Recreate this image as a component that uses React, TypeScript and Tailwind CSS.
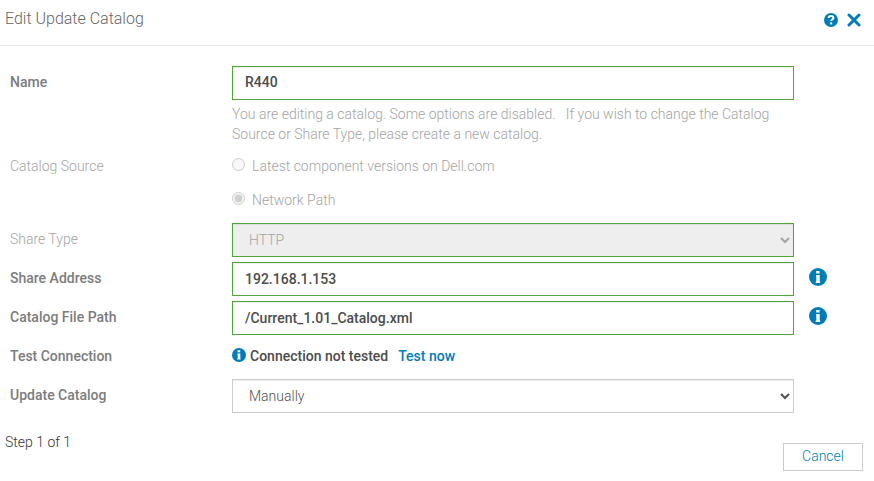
import type { ReactNode } from 'react';

function InfoIcon({ size }: { size: number }) {
  return (
    <svg width={size} height={size} viewBox="0 0 18 18" className="block shrink-0" aria-hidden="true">
      <circle cx="9" cy="9" r="9" fill="#007db8" />
      <path d="M7.2 3h3.4v2.5H7.2zM7 7h3.7v6.5h.4v1.4H6.7v-1.4h.6V8.4H7z" fill="#fff" />
    </svg>
  );
}

function HelpIcon() {
  return (
    <svg width="14" height="14" viewBox="0 0 14 14" className="block" aria-hidden="true">
      <circle cx="7" cy="7" r="7" fill="#007db8" />
      <path d="M4.6 5C4.7 3.7 5.6 3 7 3s2.4.8 2.4 1.9c0 1.5-2.2 1.6-2.2 3.2" fill="none" stroke="#fff" strokeWidth="2" />
      <path d="M6.1 9.4h2.1v2H6.1z" fill="#fff" />
    </svg>
  );
}

function CloseIcon() {
  return (
    <svg width="14" height="14" viewBox="0 0 14 14" className="block" aria-hidden="true">
      <path d="M2 2l10 10M12 2L2 12" stroke="#007db8" strokeWidth="3" strokeLinecap="round" />
    </svg>
  );
}

function Row({ label, muted, className, children }: { label: string; muted?: boolean; className: string; children: ReactNode }) {
  return (
    <div className={`flex ${className}`}>
      <div className={`w-[222px] shrink-0 leading-5 pt-[6px] ${muted ? 'font-light text-[#a4a4a4]' : 'font-medium text-[#7c7c7c]'}`}>
        {label}
      </div>
      {children}
    </div>
  );
}

const field =
  'block h-[34px] w-[562px] shrink-0 rounded-none border border-[#51a53a] bg-white px-3 font-medium text-[#4c4c4c] shadow-[inset_0_1px_1px_rgba(0,0,0,0.075)] outline-none';

const radio = 'm-0 mt-[2px] block h-[13px] w-[13px] shrink-0';

export default function App() {
  return (
    <div className="h-[481px] w-[874px] overflow-hidden bg-white font-['Roboto',sans-serif] text-[14px] leading-5">
      <header className="flex h-[46px] justify-between border-b border-[#e5e5e5] pl-[5px] pr-[13px]">
        <h1 className="pt-[9px] text-[16px] leading-5 font-light text-[#666]">Edit Update Catalog</h1>
        <div className="flex gap-[9px] pt-[13px]">
          <HelpIcon />
          <CloseIcon />
        </div>
      </header>

      <main className="pl-[10px] pt-5">
        <Row label="Name" className="h-[84px]">
          <div>
            <input className={`${field} pb-[2px]`} defaultValue="R440" />
            <p className="mt-1 w-[562px] font-light whitespace-pre text-[#a4a4a4]">
              {'You are editing a catalog. Some options are disabled.   If you wish to change the Catalog\nSource or Share Type, please create a new catalog.'}
            </p>
          </div>
        </Row>
        <Row label="Catalog Source" muted className="h-[73px]">
          <div className="flex flex-col gap-[14px] pt-[6px] font-light text-[#a4a4a4]">
            <label className="flex gap-[7px]">
              <input type="radio" name="source" disabled className={radio} />
              Latest component versions on Dell.com
            </label>
            <label className="flex gap-[7px]">
              <input type="radio" name="source" disabled defaultChecked className={radio} />
              Network Path
            </label>
          </div>
        </Row>
        <Row label="Share Type" muted className="mb-[5px]">
          <select disabled className="block h-[34px] w-[562px] border border-[#51a53a] bg-[#eee] px-3 font-light text-[#a4a4a4] opacity-100 shadow-[inset_0_1px_1px_rgba(0,0,0,0.075)]">
            <option>HTTP</option>
          </select>
        </Row>
        <Row label="Share Address" className="mb-[5px]">
          <input className={field} defaultValue="192.168.1.153" />
          <div className="pt-[6px] pl-[15px]"><InfoIcon size={18} /></div>
        </Row>
        <Row label="Catalog File Path" className="mb-[5px]">
          <input className={field} defaultValue="/Current_1.01_Catalog.xml" />
          <div className="pt-[6px] pl-[15px]"><InfoIcon size={18} /></div>
        </Row>
        <Row label="Test Connection" className="h-[39px]">
          <div className="flex pt-[6px] font-medium text-[#4c4c4c]">
            <div className="mr-1 pt-[2px]"><InfoIcon size={14} /></div>
            Connection not tested
            <a className="ml-[10px] text-[#007db8]">Test now</a>
          </div>
        </Row>
        <Row label="Update Catalog" className="">
          <select className="block h-[34px] w-[562px] border border-[#ccc] bg-white px-3 font-light text-[#505050] shadow-[inset_0_1px_1px_rgba(0,0,0,0.075)]">
            <option>Manually</option>
          </select>
        </Row>
      </main>

      <footer className="flex items-start justify-between pt-[19px] pr-[11px] pl-[5px]">
        <span className="font-light text-[#333]">Step 1 of 1</span>
        <button className="mt-[11px] h-7 w-20 border border-[#ccc] bg-white pb-[2px] font-light text-[#007db8]">Cancel</button>
      </footer>
    </div>
  );
}
